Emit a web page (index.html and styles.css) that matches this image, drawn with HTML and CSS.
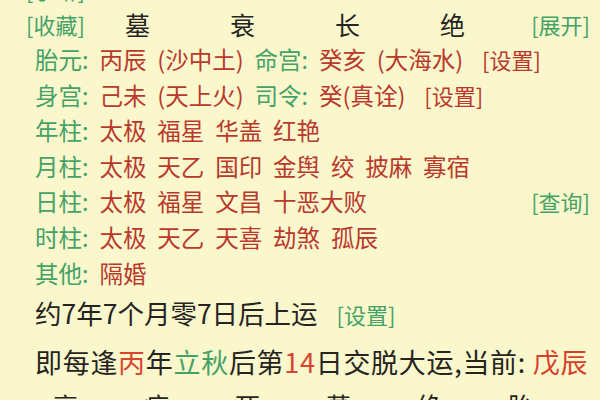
FILE: index.html
```html
<!DOCTYPE html>
<html lang="zh-CN">
<head>
    <meta charset="UTF-8">
    <meta name="viewport" content="width=device-width, initial-scale=1.0">
    <title>命盘</title>
    <link rel="stylesheet" href="styles.css">
</head>
<body>
    <div class="sheet">
        <div class="cut"><span class="link">[手琳]</span></div>
        <div class="stages top">
            <span class="link first">[收藏]</span>
            <span class="stage">墓</span>
            <span class="stage">衰</span>
            <span class="stage">长</span>
            <span class="stage">绝</span>
            <span class="link last">[展开]</span>
        </div>
        <div class="pillars">
            <div class="row"><span class="key">胎元:</span> <span class="val">丙辰 (沙中土)</span> <span class="key">命宫:</span> <span class="val">癸亥 (大海水)</span> <span class="link red">[设置]</span></div>
            <div class="row"><span class="key">身宫:</span> <span class="val">己未 (天上火)</span> <span class="key">司令:</span> <span class="val">癸(真诠)</span> <span class="link red">[设置]</span></div>
            <div class="row"><span class="key">年柱:</span> <span class="val">太极 福星 华盖 红艳</span></div>
            <div class="row"><span class="key">月柱:</span> <span class="val">太极 天乙 国印 金舆 绞 披麻 寡宿</span></div>
            <div class="row"><span class="link query">[查询]</span><span class="key">日柱:</span> <span class="val">太极 福星 文昌 十恶大败</span></div>
            <div class="row"><span class="key">时柱:</span> <span class="val">太极 天乙 天喜 劫煞 孤辰</span></div>
            <div class="row"><span class="key">其他:</span> <span class="val">隔婚</span></div>
        </div>
        <p class="luck">约7年7个月零7日后上运 <span class="link">[设置]</span></p>
        <p class="luck next">即每逢<span class="hot">丙</span>年<span class="cool">立秋</span>后第<span class="hot">14</span>日交脱大运,当前: <span class="now">戊辰</span></p>
        <div class="stages bottom">
            <span class="stage">衰</span>
            <span class="stage">病</span>
            <span class="stage">死</span>
            <span class="stage">墓</span>
            <span class="stage">绝</span>
            <span class="stage">胎</span>
        </div>
    </div>
</body>
</html>
```

FILE: styles.css
```css
body {
    margin: 0;
    background: #faf7cd;
    font-family: "Noto Sans CJK SC", "Noto Sans", sans-serif;
    color: #262420;
    overflow: hidden;
}
.sheet {
    margin-top: -28px;
}
.link {
    font-size: 22px;
    color: #45a266;
    white-space: nowrap;
    word-spacing: 0;
}
.link.red {
    color: #b9372c;
    margin-left: 8px;
}
.cut {
    height: 34px;
    line-height: 34px;
    padding-left: 26px;
}
.stages {
    display: grid;
    align-items: center;
}
.stages.top {
    grid-template-columns: 85px repeat(4, 105px) 1fr;
    height: 36px;
    line-height: 36px;
}
.stages.bottom {
    grid-template-columns: repeat(6, 91px);
    padding-left: 20px;
    height: 42px;
    line-height: 42px;
}
.stage {
    font-size: 25px;
    text-align: center;
}
.first {
    padding-left: 26px;
}
.last {
    text-align: right;
    padding-right: 10px;
}
.pillars {
    padding-left: 35px;
    padding-right: 10px;
}
.row {
    font-size: 23.5px;
    word-spacing: 5.6px;
    height: 35.6px;
    line-height: 35.6px;
    white-space: nowrap;
}
.query {
    float: right;
}
.key {
    color: #45a266;
}
.val {
    color: #b9392d;
}
.luck {
    margin: 0;
    padding-left: 35px;
    font-size: 26.5px;
    height: 44px;
    line-height: 44px;
    white-space: nowrap;
}
.luck.next {
    margin-top: 5px;
    font-size: 27px;
    letter-spacing: 0.7px;
}
.luck .link {
    margin-left: 13px;
}
.hot {
    color: #d8452f;
}
.cool {
    color: #45a266;
}
.now {
    color: #d8402b;
}
```
